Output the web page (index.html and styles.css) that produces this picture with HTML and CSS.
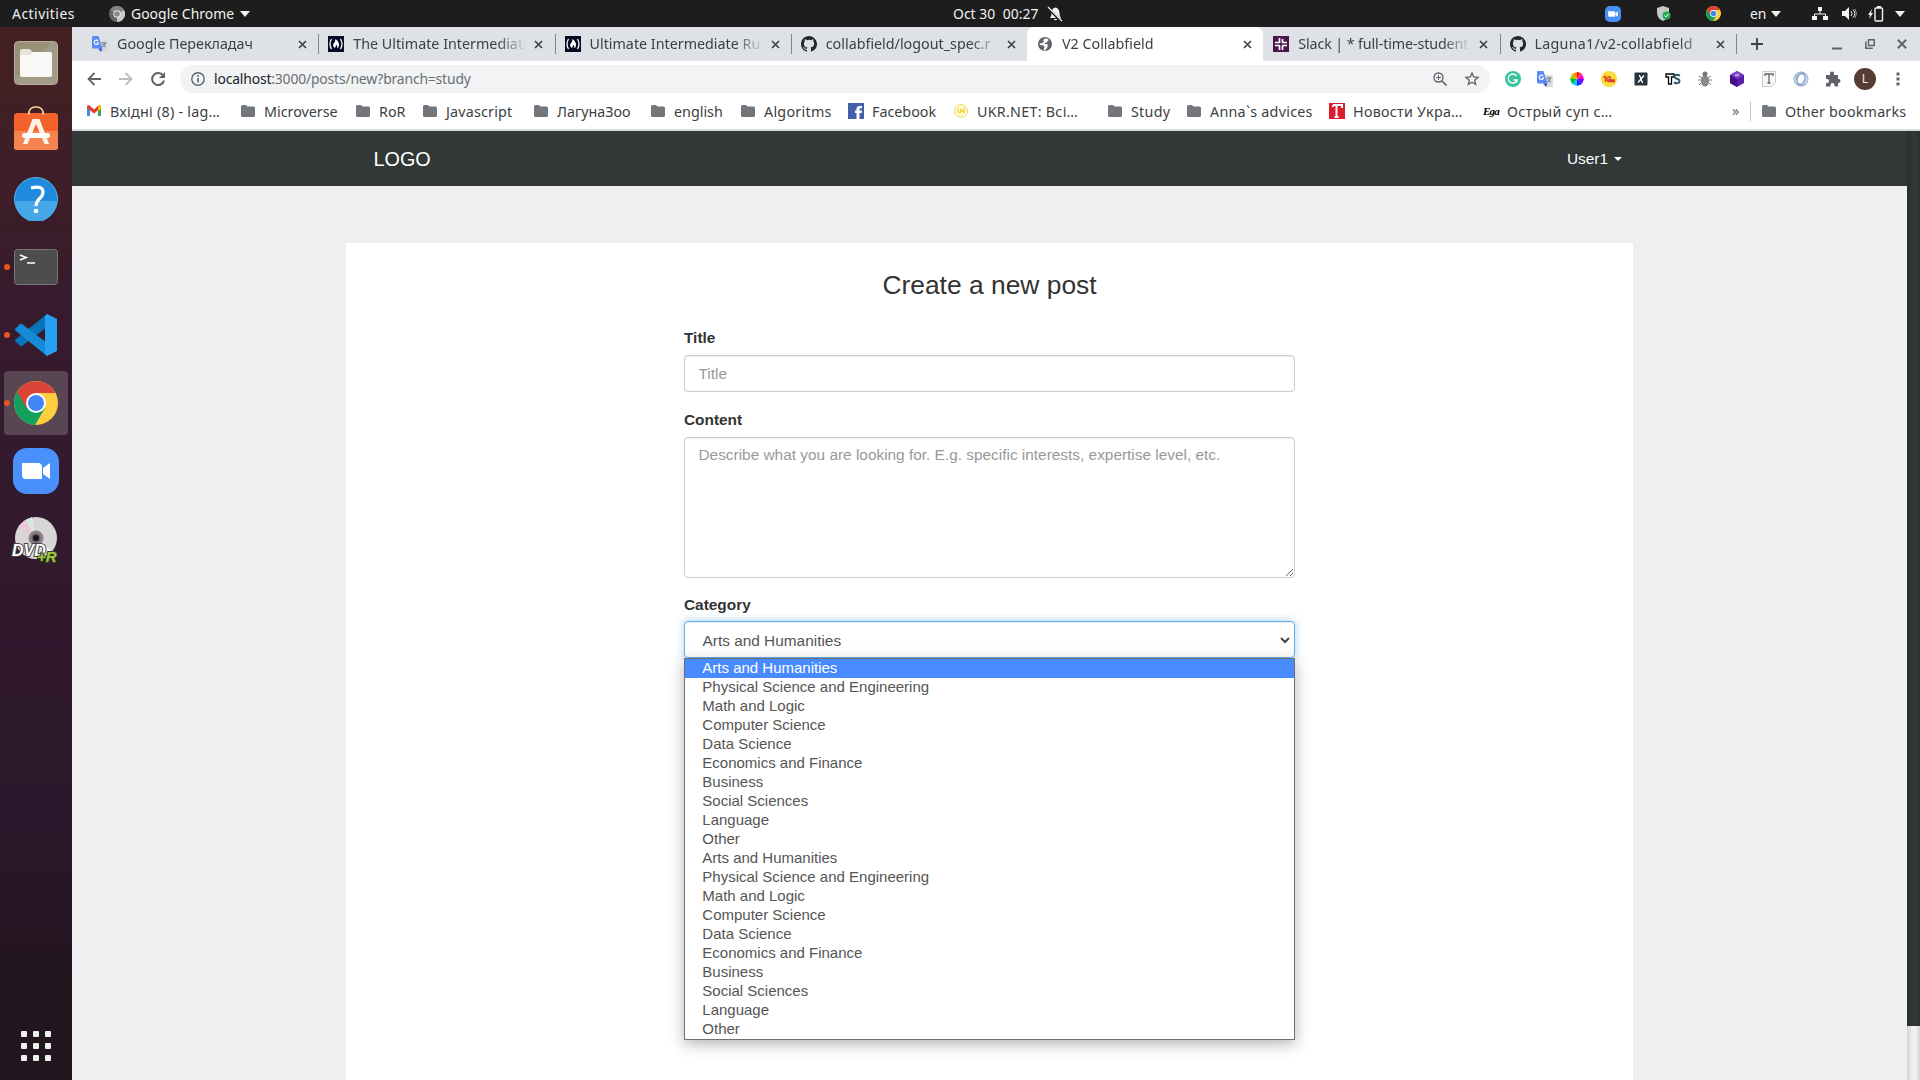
FILE: index.html
```html
<!DOCTYPE html>
<html lang="en">
<head>
<meta charset="utf-8">
<title>V2 Collabfield</title>
<link rel="stylesheet" href="styles.css">
</head>
<body>
<svg class="defs" aria-hidden="true">
  <symbol id="chrome" viewBox="0 0 44 44"><circle cx="22" cy="22" r="22" fill="#ffcd40"/><path d="M22 22L3 11A22 22 0 0 0 21 44L31 27z" fill="#12a05c"/><path d="M3 11A22 22 0 0 1 41.500 12H22L12.500 27z" fill="#db4437"/><circle cx="22" cy="22" r="10" fill="#fff"/><circle cx="22" cy="22" r="8" fill="#4285f4"/></symbol>
  <symbol id="zoomapp" viewBox="0 0 46 46"><rect width="46" height="46" rx="14" fill="#4a90fb"/><path d="M9 15h16a4 4 0 0 1 4 4v12H13a4 4 0 0 1-4-4zM30 20l7-5v16l-7-5z" fill="#fff"/></symbol>
  <symbol id="folder" viewBox="0 0 14 12"><path d="M0 1.500Q0 0 1.500 0H5l1.500 1.500h6Q14 1.500 14 3v7.500Q14 12 12.500 12h-11Q0 12 0 10.500z" fill="#73777b"/></symbol>
  <symbol id="translate" viewBox="0 0 16 16"><path d="M6 4h10v12H9z" fill="#dcdcdc"/><path d="M9.500 7h5M12 6v1M13.500 7q-1 3-3.500 4M10.500 8q1 2 3.500 3" stroke="#607988" fill="none"/><path d="M0 1q0-1 1-1h5.500l4 12.500H1q-1 0-1-1z" fill="#5b8af5"/><path d="M6 12.500h4.500L9 16z" fill="#3c55c5"/><path d="M6.200 5A2.200 2.200 0 1 0 6.500 7H4.700" stroke="#fff" stroke-width="1.100" fill="none"/></symbol>
  <symbol id="fcc" viewBox="0 0 16 16"><path fill="#0a0a23" d="M0 0h16v16H0z"/><path d="M3.500 3q-3 5 0 10M12.500 3q3 5 0 10" stroke="#fff" stroke-width="1.300" fill="none"/><path d="M7.500 3q4 3 3.500 6.500Q10.500 12 9 12q1-2-.8-3.500Q8 11 6.500 12 4.500 10 5.200 8 7.500 6 7.500 3z" fill="#fff"/></symbol>
  <symbol id="github" viewBox="0 0 16 16"><path fill="#24292e" d="M8 0C3.580 0 0 3.580 0 8c0 3.540 2.290 6.530 5.470 7.590.4.070.55-.17.55-.38 0-.19-.01-.82-.01-1.490-2.010.37-2.530-.49-2.690-.94-.09-.23-.48-.94-.82-1.130-.28-.15-.68-.52-.01-.53.63-.01 1.080.58 1.230.82.72 1.210 1.870.87 2.330.66.070-.52.28-.87.51-1.070-1.780-.2-3.640-.89-3.640-3.950 0-.87.31-1.590.82-2.150-.08-.2-.36-1.020.08-2.120 0 0 .67-.21 2.200.82a7.500 7.500 0 0 1 4 0c1.530-1.040 2.200-.82 2.200-.82.44 1.100.16 1.920.08 2.120.51.56.82 1.270.82 2.150 0 3.070-1.870 3.750-3.650 3.950.29.25.54.73.54 1.480 0 1.070-.01 1.930-.01 2.200 0 .21.15.46.55.38A8 8 0 0 0 8 0z"/></symbol>
  <symbol id="x" viewBox="0 0 9 9"><path d="M1 1l7 7M8 1L1 8" stroke="#3c4043" stroke-width="1.600"/></symbol>
  <symbol id="caret" viewBox="0 0 10 6"><path d="M0 0h10L5 6z" fill="#f2f2f2"/></symbol>
</svg>

<header class="topbar">
  <span class="activities">Activities</span>
  <span class="appmenu">
    <svg width="16" height="16" viewBox="0 0 16 16"><circle cx="8" cy="8" r="8" fill="#666"/><path d="M8 8L1 4a8 8 0 0 1 14 0z" fill="#858585"/><path d="M8 8l7-4a8 8 0 0 1-7 12z" fill="#c9c9c9"/><circle cx="8" cy="8" r="3.700" fill="#eee"/><circle cx="8" cy="8" r="2.800" fill="#888"/></svg>
    <span class="appname">Google Chrome</span>
    <svg width="10" height="6"><use href="#caret"/></svg>
  </span>
  <span class="clock">Oct 30&nbsp; 00:27
    <svg width="16" height="16" viewBox="0 0 16 16"><path d="M3 12q1.500-1.500 1.500-5Q4.500 2 8.500 1.500 12 2 12.500 7q0 3 1.500 5zM6.500 13h4q-2 2.500-4 0z" fill="#f2f2f2"/><path d="M1 2l13 13" stroke="#1d1d1d" stroke-width="2.500"/><path d="M1 1l14 14" stroke="#f2f2f2" stroke-width="1.300"/></svg>
  </span>
  <div class="tray">
    <svg class="t-zoom" width="16" height="16"><use href="#zoomapp"/></svg>
    <svg class="t-shield" width="14" height="15" viewBox="0 0 14 15"><path d="M0 2l6-2 6 2v5q0 5-6 8-6-3-6-8z" fill="#c9c9c9"/><circle cx="9.500" cy="9.500" r="4" fill="#21b24b"/><path d="M7.500 9.500l1.500 1.500 2.500-3" stroke="#fff" fill="none"/></svg>
    <svg class="t-chrome" width="15" height="15"><use href="#chrome"/></svg>
    <span class="t-lang">en</span>
    <svg class="t-caret" width="10" height="6"><use href="#caret"/></svg>
    <svg class="t-net" width="16" height="14" viewBox="0 0 16 14"><path d="M6 0h4v4H6zM0 9h5v4H0zM11 9h5v4h-5z" fill="#f2f2f2"/><path d="M8 4v3M2.500 9V7h11v2" stroke="#f2f2f2" fill="none"/></svg>
    <svg class="t-vol" width="15" height="14" viewBox="0 0 15 14"><path d="M0 4h3l4-4v13L3 9H0z" fill="#f2f2f2"/><path d="M9 4q2 2.500 0 5M11 2.500q3.500 4 0 8" stroke="#f2f2f2" fill="none"/><path d="M13 2q3 4.500 0 9" stroke="#999" fill="none"/></svg>
    <svg class="t-bat" width="16" height="16" viewBox="0 0 16 16"><path d="M4 3L0 9h2l-1 4 4-6H3z" fill="#f2f2f2"/><rect x="7" y="2" width="7.500" height="13" rx="1" fill="none" stroke="#f2f2f2" stroke-width="1.400"/><path d="M9 0h4v2H9z" fill="#f2f2f2"/></svg>
    <svg width="10" height="6"><use href="#caret"/></svg>
  </div>
</header>

<div class="desktop">
  <aside class="dock">
    <div class="launcher"><svg width="44" height="44" viewBox="0 0 44 44"><rect x=".5" y=".5" width="43" height="43" rx="4" fill="#989078" stroke="#b8b19d"/><path d="M1 38L38 1h5v42H1z" fill="#a29b87"/><path d="M6 10q0-2 2-2h7q2 0 3 3h3v5H6z" fill="#e6e2d8"/><path d="M6 15q0-1 1-1h9l3-3h17q2 0 2 2v21q0 2-2 2H8q-2 0-2-2z" fill="#faf9f8"/></svg></div>
    <div class="launcher store"><svg width="44" height="44" viewBox="0 0 44 44"><path d="M15 9V6q1-5 7-5t7 5v3" fill="none" stroke="#f5cf98" stroke-width="1.700"/><rect y="7" width="44" height="37" rx="3" fill="#f4632c"/><path d="M0 25h44v16q0 3-3 3H3q-3 0-3-3z" fill="#f48350"/><path d="M15 9V6M29 9V6" stroke="#f5cf98" stroke-width="1.700"/><path d="M18.500 13h7L35 38h-4.500L22 18l-8.500 20H9z" fill="#fff1e8"/><rect x="8" y="27" width="28" height="5" rx="2.500" fill="#fff"/></svg></div>
    <div class="launcher"><svg width="44" height="44" viewBox="0 0 44 44"><circle cx="22" cy="22" r="21.500" fill="#1f8ade" stroke="#58b2ee"/><path d="M1 24h42a21 21 0 0 1-42 0z" fill="#46a7e8"/><path d="M17 11q12-3 12 4c0 7-7 6-7 14" fill="none" stroke="#fff" stroke-width="3.200"/><circle cx="22" cy="34" r="2.300" fill="#fff"/></svg></div>
    <div class="launcher running"><svg width="44" height="36" viewBox="0 0 44 36"><rect x=".5" y=".5" width="43" height="35" rx="3" fill="#4d4d4d" stroke="#777"/><path d="M6 6l6 2.500L6 11M13 14h8" fill="none" stroke="#fff" stroke-width="1.700"/></svg></div>
    <div class="launcher running"><svg width="42" height="42" viewBox="0 0 42 42"><path d="M0 27l5 5q1 .7 2 0L32 13V0L1 25q-1 1-1 2z" fill="#0874b9"/><path d="M0 15l5-5q1-.7 2 0l25 19v13L1 17q-1-1-1-2z" fill="#168bd5"/><path d="M32 0l10 5v32l-10 5-2-2V2z" fill="#26a0f2"/></svg></div>
    <div class="launcher running active"><svg width="44" height="44"><use href="#chrome"/></svg></div>
    <div class="launcher"><svg width="46" height="46"><use href="#zoomapp"/></svg></div>
    <div class="launcher"><svg class="disc" width="50" height="48" viewBox="0 0 50 48"><circle cx="25" cy="23" r="21" fill="#d7d5d5"/><path d="M25 23L7 12 15 5z" fill="#ecc9d4"/><path d="M25 23L15 5l6-3z" fill="#d5ebe1"/><path d="M25 23l16 13-7 6z" fill="#f3f3f3"/><circle cx="25" cy="23" r="7.500" fill="#8d8189"/><circle cx="25" cy="23" r="4.500" fill="#655c65"/><circle cx="25" cy="23" r="3" fill="#1f1223"/><text x="1" y="41" class="dvd">DVD<tspan x="26" y="47" class="dvdr">+R</tspan></text></svg></div>
    <div class="appgrid"><i></i><i></i><i></i><i></i><i></i><i></i><i></i><i></i><i></i></div>
  </aside>

  <main class="browser">
    <div class="tabs">
      <div class="tab"><svg width="16" height="18"><use href="#translate"/></svg><span>Google Перекладач</span><svg class="close" width="9" height="9"><use href="#x"/></svg></div>
      <div class="tab"><svg width="16" height="16"><use href="#fcc"/></svg><span>The Ultimate Intermediate</span><svg class="close" width="9" height="9"><use href="#x"/></svg></div>
      <div class="tab"><svg width="16" height="16"><use href="#fcc"/></svg><span>Ultimate Intermediate Ru</span><svg class="close" width="9" height="9"><use href="#x"/></svg></div>
      <div class="tab nosep"><svg width="16" height="16"><use href="#github"/></svg><span>collabfield/logout_spec.r</span><svg class="close" width="9" height="9"><use href="#x"/></svg></div>
      <div class="tab current"><svg width="16" height="16" viewBox="0 0 16 16"><circle cx="8" cy="8" r="7" fill="#5f6368"/><path d="M8 2.500l-2 1.500 1 1.500-2 1.700H2.500L3 9l3.500.5 1 1.500-1 3 1.500.5 2-2.500 1-2.500-1-1.500H8L7.500 7l2.500-.5L10.500 5 12 4 10 2.500z" fill="#fff"/></svg><span>V2 Collabfield</span><svg class="close" width="9" height="9"><use href="#x"/></svg></div>
      <div class="tab"><svg width="16" height="16" viewBox="0 0 16 16"><path fill="#4a154b" d="M0 0h16v16H0z"/><path d="M6.500 2v5M9.500 3v4M2 6.500h5M9 6.500h5M2 9.500h4M9 9.500h5M6.500 9v5M9.500 10v4" stroke="#fff" stroke-width="1.700"/></svg><span class="tight">Slack | * full-time-student</span><svg class="close" width="9" height="9"><use href="#x"/></svg></div>
      <div class="tab"><svg width="16" height="16"><use href="#github"/></svg><span class="loose">Laguna1/v2-collabfield</span><svg class="close" width="9" height="9"><use href="#x"/></svg></div>
      <svg class="newtab" width="12" height="12" viewBox="0 0 12 12"><path d="M6 0v12M0 6h12" stroke="#3c4043" stroke-width="1.800"/></svg>
      <div class="winbtns">
        <svg width="10" height="12" viewBox="0 0 10 12"><path d="M0 10.500h10" stroke="#5f6368" stroke-width="2"/></svg>
        <svg width="10" height="10" viewBox="0 0 10 10"><path d="M3.500.8h5.700v5.700H3.500zM.8 2.500v6.700h7" fill="none" stroke="#5f6368" stroke-width="1.500"/></svg>
        <svg width="10" height="10" viewBox="0 0 9 9"><path d="M.7.7l7.600 7.600M8.300.7L.7 8.300" stroke="#5f6368" stroke-width="1.700"/></svg>
      </div>
    </div>

    <div class="toolbar">
      <svg class="nav" width="14" height="14" viewBox="0 0 14 14"><path d="M14 7H1.500M7.500 1l-6 6 6 6" fill="none" stroke="#5f6368" stroke-width="1.800"/></svg>
      <svg class="nav" width="14" height="14" viewBox="0 0 14 14"><path d="M0 7h12.500M6.500 1l6 6-6 6" fill="none" stroke="#babcbe" stroke-width="1.800"/></svg>
      <svg class="nav" width="14" height="14" viewBox="0 0 14 14"><path d="M12 3.500A6 6 0 1 0 13 8.500" fill="none" stroke="#5f6368" stroke-width="2"/><path d="M14 0v6H8z" fill="#5f6368"/></svg>
      <div class="omnibox">
        <svg width="14" height="14" viewBox="0 0 14 14"><circle cx="7" cy="7" r="6.200" fill="none" stroke="#5f6368" stroke-width="1.400"/><path d="M7 6v4.500M7 3v1.700" stroke="#5f6368" stroke-width="1.600"/></svg>
        <span class="url"><b>localhost</b>:3000/posts/new?branch=study</span>
        <svg class="mag" width="14" height="14" viewBox="0 0 14 14"><circle cx="5.500" cy="5.500" r="4.500" fill="none" stroke="#5f6368" stroke-width="1.400"/><path d="M9 9l4.500 4.500" stroke="#5f6368" stroke-width="1.700"/><path d="M3 5.500h5M5.500 3v5" stroke="#5f6368"/></svg>
        <svg width="14" height="14" viewBox="0 0 14 14"><path d="M7 1l1.700 4 4.300.4-3.300 2.900 1 4.200L7 10.300l-3.700 2.200 1-4.200L1 5.400 5.300 5z" fill="none" stroke="#5f6368" stroke-width="1.300"/></svg>
      </div>
      <div class="exts">
        <svg viewBox="0 0 16 16"><circle cx="8" cy="8" r="8" fill="#36c39b"/><path d="M11.500 5A4.500 4.500 0 1 0 12 9H8.500M12 9v2.500" fill="none" stroke="#fff" stroke-width="1.400"/></svg>
        <svg viewBox="0 0 16 16"><use href="#translate"/></svg>
        <svg viewBox="0 0 16 16"><path d="M8 8V1l3 .7z" fill="#f00"/><path d="M8 8l3-6.300L13 3z" fill="#f0306b"/><path d="M8 8l5-5 2 5z" fill="#f0c"/><path d="M8 8h7l-2 5z" fill="#70f"/><path d="M8 8l5 5-5 2z" fill="#22f"/><path d="M8 8v7l-5-2z" fill="#0cf"/><path d="M8 8l-5 5-2-5z" fill="#0b4"/><path d="M8 8H1l2-5z" fill="#9c0"/><path d="M8 8L3 3l5-2z" fill="#f80"/></svg>
        <svg viewBox="0 0 16 16"><circle cx="8" cy="8" r="8" fill="#fddb3b"/><path d="M2.500 6.500l2-1V11M10 6.500Q6 5 6 8t3 2.500h5M9.500 8q-2-.5-1.500 1h6" fill="none" stroke="#dc3f25" stroke-width="1.400"/></svg>
        <svg viewBox="0 0 16 16"><rect x="1.500" y="1.500" width="13" height="13" rx="1" fill="#26343f"/><path d="M6 4.500q1 0 2 3.500t2 3.500M11 4.500L5 11.500" stroke="#fff" stroke-width="1.400" fill="none"/></svg>
        <svg viewBox="0 0 16 16"><path d="M1 3h8v3H6.500v7h-3V6H1z" fill="#fff" stroke="#000" stroke-width="1.300"/><path d="M15 4.500q-5-2-5.500 1 0 1.500 3 2.500t1.500 3.500q-2 1.500-5 0" fill="none" stroke="#31566f" stroke-width="2"/></svg>
        <svg viewBox="0 0 16 16"><path d="M2 5l3 2M1 9h4M2 14l3-3M14 5l-3 2M15 9h-4M14 14l-3-3" stroke="#777"/><ellipse cx="8" cy="10" rx="4" ry="5.500" fill="#888"/><circle cx="8" cy="3" r="2.500" fill="#777"/></svg>
        <svg viewBox="0 0 16 16"><path d="M8 0l7 4v8l-7 4-7-4V4z" fill="#5b1fa8"/><path d="M8 0l7 4-7 4-7-4z" fill="#7840c8"/><path d="M8 8v8l-7-4V4z" fill="#43108a"/><path d="M6 4l2-1 2 1-2 1z" fill="none" stroke="#ddd" stroke-width=".8"/></svg>
        <svg viewBox="0 0 16 16"><path d="M1.500.5h13v11l-4 4h-9z" fill="#f7f7f7" stroke="#ccc"/><path d="M4 5V3h8v2M8 3v9M6.500 12h3" fill="none" stroke="#666" stroke-width="1.300"/></svg>
        <svg viewBox="0 0 16 16"><circle cx="8" cy="8" r="7.500" fill="#8fabd2"/><path d="M8 1A7 7 0 0 0 5 14Q-1 5 8 1z" fill="#d7e1ef"/><ellipse cx="8" cy="8" rx="3" ry="4.500" fill="#fff" transform="rotate(20 8 8)"/><path d="M9 14q6-5 2-12 7 5 2 11z" fill="#c2d1e6"/></svg>
        <svg viewBox="0 0 16 16"><path d="M1 4h4V2.500a2 2 0 0 1 4 0V4h4v4h.500a2 2 0 0 1 0 4H13v3.500H9.500V14a2 2 0 0 0-4 0v1.500H1V12h1a2 2 0 0 0 0-4H1z" fill="#5f6368"/></svg>
      </div>
      <span class="avatar">L</span>
      <svg width="4" height="16" viewBox="0 0 4 16"><path d="M.5 1.500h3v3h-3zM.5 6.500h3v3h-3zM.5 11.500h3v3h-3z" fill="#5f6368"/></svg>
    </div>

    <nav class="bookmarks">
      <a><svg width="14" height="12" viewBox="0 0 14 12"><path d="M0 2h3v9H0z" fill="#4285f4"/><path d="M11 2h3v9h-3z" fill="#34a853"/><path d="M0 1l2-1 5 4.500L12 0l2 1v2L7 8.500 0 3z" fill="#e33b2e"/><path d="M11 1.500L12.500 0 14 1v3l-3 2z" fill="#fbbc04"/></svg><span class="loose">Вхідні (8) - lag…</span></a>
      <a><svg width="14" height="12"><use href="#folder"/></svg><span>Microverse</span></a>
      <a><svg width="14" height="12"><use href="#folder"/></svg><span>RoR</span></a>
      <a><svg width="14" height="12"><use href="#folder"/></svg><span class="javascript">Javascript</span></a>
      <a><svg width="14" height="12"><use href="#folder"/></svg><span>ЛагунаЗоо</span></a>
      <a><svg width="14" height="12"><use href="#folder"/></svg><span>english</span></a>
      <a><svg width="14" height="12"><use href="#folder"/></svg><span class="loose">Algoritms</span></a>
      <a class="wide"><svg width="16" height="16" viewBox="0 0 16 16"><path fill="#4460a9" d="M0 0h16v16H0z"/><path d="M8.500 16v-6H7V7.500h1.500V6q0-3 3-3H14v2.300h-1.500q-1 0-1 1v1.200H14l-.4 2.500h-2.100v6z" fill="#fff"/></svg><span>Facebook</span></a>
      <a><svg width="14" height="14" viewBox="0 0 14 14"><circle cx="7" cy="7" r="6.400" fill="#fff9d5" stroke="#f1d94b"/><path d="M4 4v4q1.500 2 3 0V5l3 4V4" fill="none" stroke="#ebc600"/></svg><span class="loose">UKR.NET: Всі…</span></a>
      <a><svg width="14" height="12"><use href="#folder"/></svg><span class="loose">Study</span></a>
      <a><svg width="14" height="12"><use href="#folder"/></svg><span class="loose">Anna`s advices</span></a>
      <a class="wide"><svg width="16" height="16" viewBox="0 0 16 16"><path fill="#db1e2e" d="M0 0h16v16H0z"/><path d="M4 2h9v3M7.500 2v12M5.500 14h4M4 2v2" fill="none" stroke="#fff" stroke-width="2"/></svg><span class="loose">Новости Укра…</span></a>
      <a class="wide"><em>Ega</em><span class="loose">Острый суп с…</span></a>
      <span class="more">»</span>
      <a class="other"><svg width="14" height="12"><use href="#folder"/></svg><span class="javascript">Other bookmarks</span></a>
    </nav>

    <div class="viewport">
      <div class="page">
        <div class="navbar"><div class="container"><span class="brand">LOGO</span><span class="user">User1<i></i></span></div></div>
        <section class="card">
          <form class="form">
            <h3>Create a new post</h3>
            <label>Title</label>
            <input class="control" placeholder="Title">
            <label>Content</label>
            <textarea class="control area" placeholder="Describe what you are looking for. E.g. specific interests, expertise level, etc."></textarea>
            <label class="category">Category</label>
            <div class="control select"><span>Arts and Humanities</span>
              <svg width="10" height="7" viewBox="0 0 10 7"><path d="M1 1l4 4 4-4" fill="none" stroke="#444" stroke-width="2"/></svg>
              <ul class="options">
                <li class="selected">Arts and Humanities</li><li>Physical Science and Engineering</li><li>Math and Logic</li><li>Computer Science</li><li>Data Science</li><li>Economics and Finance</li><li>Business</li><li>Social Sciences</li><li>Language</li><li>Other</li>
                <li>Arts and Humanities</li><li>Physical Science and Engineering</li><li>Math and Logic</li><li>Computer Science</li><li>Data Science</li><li>Economics and Finance</li><li>Business</li><li>Social Sciences</li><li>Language</li><li>Other</li>
              </ul>
            </div>
          </form>
        </section>
      </div>
      <div class="scrollbar"><div class="thumb"></div></div>
    </div>
  </main>
</div>
</body>
</html>
```

FILE: styles.css
```css
* { box-sizing: border-box; }
body { margin: 0; width: 1920px; height: 1080px; overflow: hidden; font: 14.3px "Noto Sans", sans-serif; color: #3c4043; display: flex; flex-direction: column; }
svg { display: block; flex: none; }
.defs { display: none; }
.loose { letter-spacing: .27px; }
.javascript { letter-spacing: .45px; }
.bookmarks .javascript { letter-spacing: .2px; }
.tight { letter-spacing: -.12px; }

.topbar { height: 27px; background: #1d1d1d; color: #f2f2f2; display: grid; grid-template-columns: 97px 856px auto 1fr; align-items: center; font-size: 13.9px; }
.activities { padding-left: 12px; letter-spacing: .5px; }
.appmenu { display: flex; align-items: center; padding-left: 12px; }
.appname { margin: 0 5px 0 6px; width: 104px; white-space: nowrap; letter-spacing: .05px; }
.clock { display: flex; align-items: center; gap: 9px; white-space: nowrap; letter-spacing: .05px; }
.tray { display: flex; align-items: center; justify-content: flex-end; padding-right: 15px; }
.t-zoom { margin-right: 36px; }
.t-shield { margin-right: 35px; }
.t-chrome { margin-right: 29px; }
.t-lang { width: 21px; }
.t-caret { margin-right: 31px; }
.t-net { margin-right: 14px; }
.t-vol { margin-right: 11px; }
.t-bat { margin-right: 11px; }

.desktop { flex: 1; display: flex; min-height: 0; }
.dock { width: 72px; padding-top: 2px; background: linear-gradient(#43201f 0, #3f1f27 120px, #371b2d 280px, #32192e 500px, #2b172b 800px, #22151e 960px); display: flex; flex-direction: column; }
.launcher { height: 68px; display: flex; align-items: center; justify-content: center; position: relative; }
.launcher.store { padding-bottom: 6px; }
.launcher.running::before { content: ""; position: absolute; left: 4px; top: 31px; width: 6px; height: 6px; border-radius: 50%; background: #e95420; }
.launcher.active { height: 64px; margin: 2px 4px; border-radius: 4px; background: #594653; }
.launcher.active::before { left: 0; top: 29px; }
.disc { overflow: visible; }
.dvd { font: italic bold 16px "Liberation Sans", sans-serif; fill: #fff; stroke: #444; stroke-width: 2px; paint-order: stroke; }
.dvdr { font-size: 15px; fill: #a2c93e; stroke: #33411b; }
.appgrid { margin: auto 0 19px 21px; display: grid; grid-template-columns: repeat(3, 6px); gap: 6px; }
.appgrid i { height: 6px; border-radius: 1px; background: #eeeeec; }

.browser { flex: 1; display: flex; flex-direction: column; min-width: 0; background: #fff; }
.tabs { height: 34px; background: #dee1e6; padding-left: 10px; display: flex; align-items: center; }
.tab { width: 236.25px; height: 34px; padding-left: 10px; display: flex; align-items: center; position: relative; }
.tab span { width: 175px; margin-left: 9px; padding-bottom: 2px; overflow: hidden; white-space: nowrap; -webkit-mask-image: linear-gradient(90deg, #000 145px, transparent 173px); mask-image: linear-gradient(90deg, #000 145px, transparent 173px); }
.close { margin-left: 6px; }
.tab:not(.current):not(.nosep)::after { content: ""; position: absolute; right: -1px; top: 7px; width: 1px; height: 20px; background: #80868b; }
.tab.current { background: #fff; border-radius: 7px 7px 0 0; }
.newtab { margin-left: 15px; }
.winbtns { margin-left: auto; margin-right: 13px; display: flex; align-items: center; gap: 22.5px; }

.toolbar { height: 36px; display: flex; align-items: center; padding: 0 20px 0 15px; }
.nav { margin-right: 18px; }
.omnibox { width: 1312px; margin-left: -3px; height: 28px; border-radius: 14px; background: #f1f3f4; display: flex; align-items: center; padding: 0 11px; }
.url { margin-left: 9px; padding-bottom: 2px; color: #6b6f73; font-size: 13.9px; letter-spacing: -.16px; }
.url b { font-weight: 400; color: #202124; }
.mag { margin-left: auto; margin-right: 18px; }
.exts { display: flex; gap: 16px; margin-left: 15px; }
.exts svg { width: 16px; height: 16px; }
.avatar { width: 22px; height: 22px; border-radius: 50%; background: #563c33; color: #eee; font-size: 12px; line-height: 22px; text-align: center; margin: 0 20px 0 13px; }

.bookmarks { height: 34px; padding: 0 0 4px 15px; border-bottom: 2px solid #dadce0; display: grid; align-items: center; grid-template-columns: 154px 115px 67px 111px 117px 90px 107px 106px 154px 79px 142px 154px 249px 18px 1fr; }
.bookmarks a { display: flex; align-items: center; gap: 9px; white-space: nowrap; }
.bookmarks .wide { gap: 8px; }
.bookmarks em { width: 16px; font: italic bold 11px "Liberation Serif", serif; letter-spacing: -.8px; color: #000; }
.bookmarks .more { color: #5f6368; line-height: 16px; }
.bookmarks .other { border-left: 1px solid #c8cacd; padding-left: 11px; height: 20px; }

.viewport { flex: 1; display: flex; min-height: 0; font: 15.4px/22px "Liberation Sans", Arial, sans-serif; color: #333; }
.page { flex: 1; background: #efefef; display: flex; flex-direction: column; }
.navbar { height: 55px; flex: none; background: #323838; color: #fff; }
.container { width: 1287px; height: 55px; margin: 0 auto; padding: 0 11px 0 27.5px; display: flex; align-items: center; justify-content: space-between; }
.brand { font-size: 19.8px; }
.user { display: flex; align-items: center; gap: 6px; }
.user i { border: 4.5px solid transparent; border-top-color: #fff; border-bottom: 0; }
.card { width: 1287px; flex: 1; margin: 57px auto 0; background: #fff; }
.form { width: 611px; margin: 0 auto; display: flex; flex-direction: column; }
h3 { margin: 28px 0 27px; font-size: 26.4px; font-weight: 500; line-height: 29px; text-align: center; }
label { font-weight: 700; margin-bottom: 6px; }
.category { margin-bottom: 5px; }
.control { display: block; width: 611px; height: 37px; margin: 0 0 17px; padding: 6px 13.500px; border: 1px solid #ccc; border-radius: 4px; background: #fff; box-shadow: inset 0 1px 1px rgba(0,0,0,.075); font: 15.4px/22px "Liberation Sans", Arial, sans-serif; color: #555; outline: 0; }
.control::placeholder { color: #999; }
.area { height: 141px; margin-bottom: 16px; resize: vertical; }
.select { position: relative; border-color: #66afe9; box-shadow: inset 0 1px 1px rgba(0,0,0,.075), 0 0 9px rgba(102,175,233,.6); display: flex; align-items: center; justify-content: space-between; padding: 2px 4px 0 17.500px; }
.options { position: absolute; left: -1px; top: 36px; width: 611px; margin: 0; padding: 0; border: 1px solid #6f6f6f; background: #fff; list-style: none; font-size: 15px; line-height: 17px; box-shadow: 0 4px 14px rgba(0,0,0,.3); }
.options li { height: 19px; padding-left: 17.300px; }
.options .selected { background: #488aff; color: #fff; }
.scrollbar { width: 13px; background: linear-gradient(90deg, #d2d2d2, #efefef 5px, #efefef 9px, #d0d0d0); }
.thumb { height: 895px; background: linear-gradient(90deg, #292e2e, #323838 6px, #323838 8px, #2a2f2f); }
```
